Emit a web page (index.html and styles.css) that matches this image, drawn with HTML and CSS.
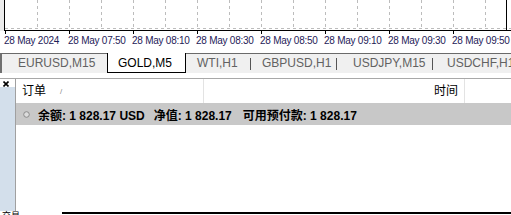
FILE: index.html
```html
<!DOCTYPE html>
<html>
<head>
<meta charset="utf-8">
<link rel="stylesheet" href="styles.css">
</head>
<body>
<div class="chart">
  <div class="plot-row">
    <div class="gutter"></div>
    <div class="plot">
      <svg class="grid" width="506" height="30" viewBox="0 0 506 30">
        <g stroke="#bcbcbc" stroke-width="1" stroke-dasharray="3 3">
          <line x1="0" y1="28.5" x2="506" y2="28.5"/>
          <line x1="32.5" y1="0" x2="32.5" y2="28"/>
          <line x1="64.5" y1="0" x2="64.5" y2="28"/>
          <line x1="96.5" y1="0" x2="96.5" y2="28"/>
          <line x1="128.5" y1="0" x2="128.5" y2="28"/>
          <line x1="160.5" y1="0" x2="160.5" y2="28"/>
          <line x1="192.5" y1="0" x2="192.5" y2="28"/>
          <line x1="224.5" y1="0" x2="224.5" y2="28"/>
          <line x1="256.5" y1="0" x2="256.5" y2="28"/>
          <line x1="288.5" y1="0" x2="288.5" y2="28"/>
          <line x1="320.5" y1="0" x2="320.5" y2="28"/>
          <line x1="352.5" y1="0" x2="352.5" y2="28"/>
          <line x1="384.5" y1="0" x2="384.5" y2="28"/>
          <line x1="416.5" y1="0" x2="416.5" y2="28"/>
          <line x1="448.5" y1="0" x2="448.5" y2="28"/>
          <line x1="480.5" y1="0" x2="480.5" y2="28"/>
        </g>
        <line x1="501.5" y1="0" x2="501.5" y2="30" stroke="#000" stroke-width="1"/>
      </svg>
    </div>
  </div>
  <div class="axis">
    <span class="tl">28 May 2024</span>
    <span class="tl">28 May 07:50</span>
    <span class="tl">28 May 08:10</span>
    <span class="tl">28 May 08:30</span>
    <span class="tl">28 May 08:50</span>
    <span class="tl">28 May 09:10</span>
    <span class="tl">28 May 09:30</span>
    <span class="tl">28 May 09:50</span>
  </div>
</div>

<div class="tabs">
  <div class="tab t1">EURUSD,M15</div>
  <div class="tab active">GOLD,M5</div>
  <div class="tab t3">WTI,H1</div>
  <div class="sep"></div>
  <div class="tab t4">GBPUSD,H1</div>
  <div class="sep"></div>
  <div class="tab t5">USDJPY,M15</div>
  <div class="sep"></div>
  <div class="tab t6">USDCHF,H1</div>
</div>
<div class="gap"></div>

<div class="panel">
  <div class="side">
    <div class="close">
      <svg width="6" height="6" viewBox="0 0 6 6"><path d="M0.5 0.5 L5.5 5.5 M5.5 0.5 L0.5 5.5" stroke="#000" stroke-width="1.6"/></svg>
    </div>
    <div class="strip"></div>
  </div>
  <div class="table">
    <div class="thead">
      <div class="th c1">订单<span class="sort">/</span></div>
      <div class="th c2">时间</div>
      <div class="th c3"></div>
    </div>
    <div class="balance">
      <svg class="ico" width="7" height="7" viewBox="0 0 7 7"><circle cx="3.5" cy="3.5" r="2.8" fill="#dcdcdc" stroke="#8a8a8a" stroke-width="1"/></svg>
      <span>余额: 1 828.17 USD</span><span class="g1">净值: 1 828.17</span><span class="g2">可用预付款: 1 828.17</span>
    </div>
  </div>
</div>

<div class="bottom">
  <span class="btab">交易</span>
  <div class="bline"></div>
</div>
</body>
</html>
```

FILE: styles.css
```css
html, body {
  margin: 0;
  padding: 0;
}
body {
  width: 511px;
  height: 215px;
  overflow: hidden;
  background: #fff;
  font-family: "Liberation Sans", "Noto Sans CJK SC", sans-serif;
}

/* chart */
.chart {
  height: 53px;
  display: flex;
  flex-direction: column;
  background: #fff;
}
.plot-row {
  display: flex;
  height: 31px;
}
.gutter {
  width: 4px;
  background: #ececec;
}
.plot {
  flex: 1;
  position: relative;
  border-left: 1px solid #000;
  border-bottom: 1px solid #000;
}
.grid {
  position: absolute;
  left: 0;
  top: 0;
  display: block;
}
.axis {
  height: 22px;
  display: flex;
  padding-left: 4px;
  background-image: repeating-linear-gradient(to right, #000 0 1px, transparent 1px 64px);
  background-size: 100% 3px;
  background-position: 5px 0;
  background-repeat: no-repeat;
}
.tl {
  flex: 0 0 64px;
  white-space: nowrap;
  font-size: 10px;
  letter-spacing: -0.25px;
  line-height: 12px;
  padding-top: 4px;
  color: #1e2158;
}

/* tabs */
.tabs {
  display: flex;
  align-items: flex-start;
  height: 19px;
  border-top: 1px solid #6a6a6a;
  border-left: 2px solid #707070;
  background: #f0f0f0;
  font-size: 12px;
}
.tab {
  line-height: 19px;
  height: 19px;
  color: #626262;
  white-space: nowrap;
  box-sizing: border-box;
}
.t1 { width: 105px; padding-left: 16px; }
.active {
  width: 79px;
  margin-top: -1px;
  padding-top: 1px;
  padding-left: 10px;
  height: 20px;
  line-height: 18px;
  background: #fff;
  color: #000;
  border-left: 1px solid #000;
  border-right: 1px solid #000;
  border-bottom: 1px solid #000;
}
.t3 { width: 64px; padding-left: 11px; }
.t4 { width: 85px; padding-left: 11px; }
.t5 { width: 95px; padding-left: 16px; }
.t6 { flex: 1; padding-left: 14px; overflow: hidden; }
.sep {
  width: 1px;
  height: 12px;
  margin-top: 4px;
  background: #555;
}
.gap {
  height: 5px;
  background: #fff;
}

/* terminal panel */
.panel {
  display: flex;
  height: 132px;
  border-top: 1px solid #a8a8a8;
}
.side {
  width: 15px;
  display: flex;
  flex-direction: column;
  border-right: 1px solid #a0a0a0;
}
.close {
  height: 6px;
  padding: 2px 0 0 3px;
}
.close svg { display: block; }
.strip {
  flex: 1;
  background: #d3dfeb;
}
.table {
  flex: 1;
  display: flex;
  flex-direction: column;
}
.thead {
  display: flex;
  height: 24px;
  font-size: 12px;
  line-height: 24px;
  color: #000;
}
.th {
  box-sizing: border-box;
  white-space: nowrap;
}
.c1 {
  width: 188px;
  padding-left: 6px;
  border-right: 1px solid #e3e3e3;
}
.sort {
  font-size: 8px;
  color: #8a8a8a;
  margin-left: 14px;
  vertical-align: 1px;
}
.c2 {
  width: 261px;
  text-align: right;
  padding-right: 6px;
  border-right: 1px solid #e3e3e3;
}
.c3 { flex: 1; }
.balance {
  height: 22px;
  background: #c8c8c8;
  display: flex;
  align-items: center;
  padding-left: 7px;
  font-size: 12px;
  font-weight: bold;
  color: #000;
  white-space: nowrap;
}
.ico {
  display: block;
  margin-right: 8px;
}
.g1 { margin-left: 9px; }
.g2 { margin-left: 11px; }

/* bottom strip */
.bottom {
  display: flex;
  align-items: flex-start;
  height: 4px;
}
.btab {
  width: 60px;
  padding-left: 2px;
  font-size: 9px;
  line-height: 9px;
  color: #000;
  font-family: "Noto Sans CJK SC", sans-serif;
}
.bline {
  flex: 1;
  margin-top: 1px;
  border-top: 2px solid #000;
}
```
